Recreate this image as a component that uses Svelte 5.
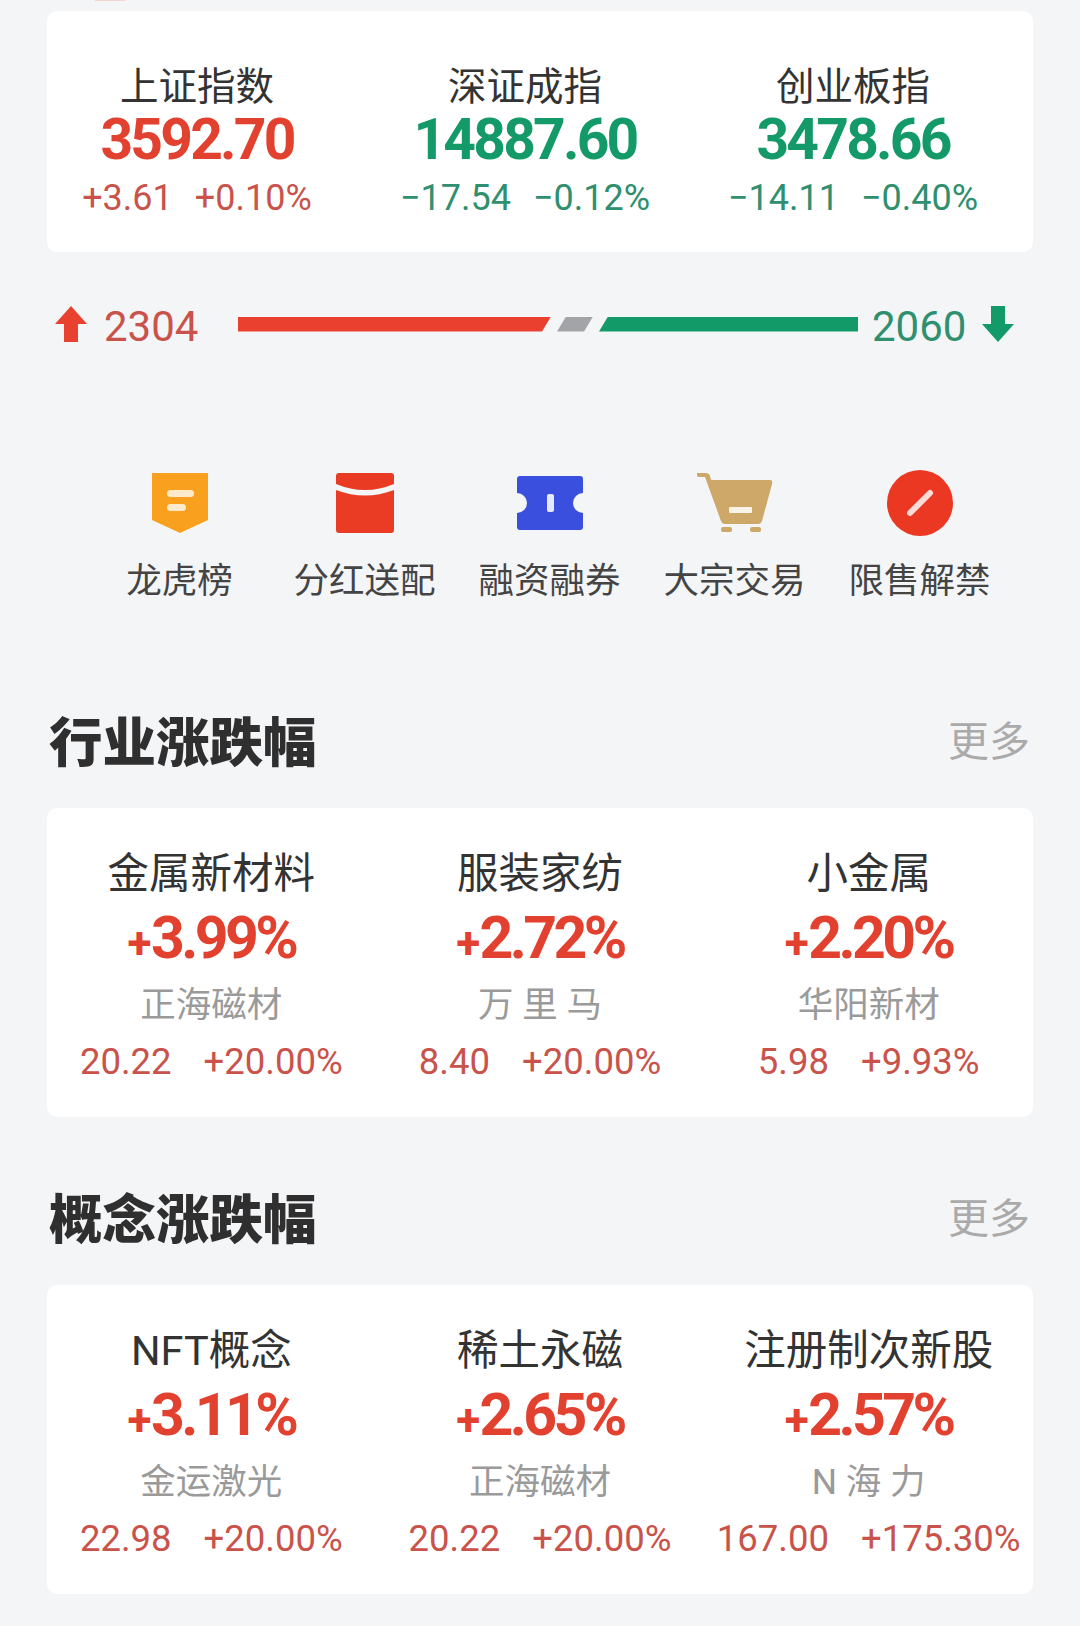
<script>
  const indices = [
    { name: '上证指数', value: '3592.70', change: '+3.61', pct: '+0.10%', tone: 'up' },
    { name: '深证成指', value: '14887.60', change: '−17.54', pct: '−0.12%', tone: 'down' },
    { name: '创业板指', value: '3478.66', change: '−14.11', pct: '−0.40%', tone: 'down' }
  ];

  const tools = ['龙虎榜', '分红送配', '融资融券', '大宗交易', '限售解禁'];

  const sections = [
    {
      title: '行业涨跌幅',
      items: [
        { name: '金属新材料', pct: '3.99%', stock: '正海磁材', price: '20.22', rise: '+20.00%' },
        { name: '服装家纺', pct: '2.72%', stock: '万 里 马', price: '8.40', rise: '+20.00%' },
        { name: '小金属', pct: '2.20%', stock: '华阳新材', price: '5.98', rise: '+9.93%' }
      ]
    },
    {
      title: '概念涨跌幅',
      items: [
        { name: 'NFT概念', pct: '3.11%', stock: '金运激光', price: '22.98', rise: '+20.00%' },
        { name: '稀土永磁', pct: '2.65%', stock: '正海磁材', price: '20.22', rise: '+20.00%' },
        { name: '注册制次新股', pct: '2.57%', stock: 'N 海 力', price: '167.00', rise: '+175.30%' }
      ]
    }
  ];
</script>

<div class="page">
  <div class="top-mark"></div>
  <section class="card index-card">
    {#each indices as item}
      <div class="index">
        <div class="index-name">{item.name}</div>
        <div class="index-value {item.tone}">{item.value}</div>
        <div class="index-sub {item.tone}">
          <span>{item.change}</span><span>{item.pct}</span>
        </div>
      </div>
    {/each}
  </section>

  <div class="breadth">
    <svg class="arrow arrow-up" viewBox="0 0 32 36"><path d="M16 0 L32 18 L23 18 L23 36 L9 36 L9 18 L0 18 Z" fill="#e8412f" /></svg>
    <span class="count up-count">2304</span>
    <div class="bars">
      <div class="bar bar-red"></div>
      <div class="bar bar-gray"></div>
      <div class="bar bar-green"></div>
    </div>
    <span class="count down-count">2060</span>
    <svg class="arrow arrow-down" viewBox="0 0 32 36"><path d="M16 36 L32 18 L23 18 L23 0 L9 0 L9 18 L0 18 Z" fill="#129a68" /></svg>
  </div>

  <nav class="tools">
    {#each tools as label, i}
      <div class="tool">
        <div class="tool-icon">
          {#if i === 0}
            <svg width="56" height="62" viewBox="0 0 56 62">
              <path d="M0 1 H56 V48 L28 61 L0 48 Z" fill="#f9a11f" />
              <rect x="15" y="18" width="27" height="7" rx="3.5" fill="#fdeacb" />
              <rect x="15" y="32" width="19" height="7" rx="3.5" fill="#fdeacb" />
            </svg>
          {:else if i === 1}
            <svg width="58" height="60" viewBox="0 0 58 60">
              <path d="M3 0 H55 Q58 0 58 3 V11 Q29 23 0 11 V3 Q0 0 3 0 Z" fill="#e93a24" />
              <path d="M0 17 Q29 28 58 17 V57 Q58 60 55 60 H3 Q0 60 0 57 Z" fill="#ea3b24" />
            </svg>
          {:else if i === 2}
            <svg width="66" height="54" viewBox="0 0 66 54">
              <path d="M3 0 H63 Q66 0 66 3 V17 A10 10 0 0 0 66 37 V51 Q66 54 63 54 H3 Q0 54 0 51 V37 A10 10 0 0 0 0 17 V3 Q0 0 3 0 Z" fill="#3a4fdd" />
              <rect x="30" y="18" width="7" height="18" rx="2" fill="#e6e9fb" />
            </svg>
          {:else if i === 3}
            <svg width="76" height="60" viewBox="0 0 76 60">
              <path d="M0 0 H9 Q12 0 13 3 L14 7 H73 Q76 7 75 11 L65 48 Q64 51 61 51 H28 Q25 51 24 48 L8 4 H2 Q0 4 0 2 Z" fill="#cda869" />
              <rect x="32" y="34" width="23" height="6" rx="1" fill="#f8f3e8" />
              <rect x="24" y="54" width="11" height="5" rx="2" fill="#cda869" />
              <rect x="53" y="54" width="11" height="5" rx="2" fill="#cda869" />
            </svg>
          {:else}
            <svg width="66" height="66" viewBox="0 0 66 66">
              <circle cx="33" cy="33" r="33" fill="#ea3823" />
              <line x1="23" y1="43" x2="43" y2="23" stroke="#fbdcd6" stroke-width="6" stroke-linecap="round" />
            </svg>
          {/if}
        </div>
        <div class="tool-label">{label}</div>
      </div>
    {/each}
  </nav>

  {#each sections as section}
    <div class="section-head">
      <h2>{section.title}</h2>
      <span class="more">更多</span>
    </div>
    <section class="card rank-card">
      {#each section.items as item}
        <div class="rank">
          <div class="rank-name">{item.name}</div>
          <div class="rank-pct"><span class="plus">+</span>{item.pct}</div>
          <div class="rank-stock">{item.stock}</div>
          <div class="rank-sub"><span>{item.price}</span><span>{item.rise}</span></div>
        </div>
      {/each}
    </section>
  {/each}
</div>

<style>
  :global(body) {
    margin: 0;
    background: #f4f5f7;
  }

  .page {
    --cjk: Roboto, 'Noto Sans CJK SC', sans-serif;
    height: 1626px;
    box-sizing: border-box;
    padding: 0 47px;
    overflow: hidden;
    font-family: var(--cjk);
    color: #333;
  }

  .top-mark {
    width: 30px;
    height: 1px;
    margin: 0 0 10px 48px;
    background: #f6d3ce;
  }

  .card {
    background: #fff;
    border-radius: 10px;
    display: grid;
  }

  .index-card {
    height: 241px;
    box-sizing: border-box;
    grid-template-columns: repeat(3, 300px);
    column-gap: 28px;
    padding-top: 54px;
  }

  .index,
  .rank {
    display: flex;
    flex-direction: column;
    align-items: center;
    white-space: nowrap;
  }

  .index-name {
    font-size: 38.5px;
    line-height: 44px;
  }

  .index-value {
    font-size: 57px;
    line-height: 62px;
    font-weight: 700;
    letter-spacing: -2.8px;
  }

  .index-sub {
    display: flex;
    gap: 22px;
    margin-top: 5px;
    font-size: 36px;
    line-height: 44px;
  }

  .up {
    color: #e2412f;
  }

  .down {
    color: #149a68;
  }

  .index-sub.up {
    color: #c9534b;
  }

  .index-sub.down {
    color: #2f8f6e;
  }

  .breadth {
    display: flex;
    align-items: center;
    height: 44px;
    margin-top: 53px;
    padding-left: 8px;
  }

  .arrow {
    width: 32px;
    height: 36px;
    flex: none;
  }

  .arrow-up {
    margin-top: -6px;
  }

  .arrow-down {
    margin-top: -6px;
    margin-left: 12px;
  }

  .count {
    font-size: 42px;
    line-height: 44px;
  }

  .up-count {
    color: #c9534b;
    margin-left: 17px;
    width: 134px;
  }

  .down-count {
    color: #2f8f6e;
    margin-left: 14px;
    width: 98px;
  }

  .bars {
    display: flex;
    gap: 6px;
    height: 15px;
    margin-top: -6px;
  }

  .bar {
    height: 100%;
  }

  .bar-red {
    width: 313px;
    background: #ea402f;
    clip-path: polygon(0 0, 100% 0, calc(100% - 9px) 100%, 0 100%);
  }

  .bar-gray {
    width: 36px;
    background: #a3a4a8;
    clip-path: polygon(9px 0, 100% 0, calc(100% - 9px) 100%, 0 100%);
  }

  .bar-green {
    width: 259px;
    background: #129a68;
    clip-path: polygon(9px 0, 100% 0, 100% 100%, 0 100%);
  }

  .tools {
    display: grid;
    grid-template-columns: repeat(5, 185px);
    margin-top: 121px;
    padding-left: 40px;
  }

  .tool {
    display: flex;
    flex-direction: column;
    align-items: center;
  }

  .tool-icon {
    height: 66px;
    display: flex;
    align-items: center;
    justify-content: center;
  }

  .tool-icon svg {
    display: block;
  }

  .tool-label {
    margin-top: 22px;
    font-size: 35.5px;
    line-height: 46px;
    color: #444;
    white-space: nowrap;
  }

  .section-head {
    display: flex;
    justify-content: space-between;
    align-items: center;
    height: 70px;
    margin-top: 105px;
    padding-left: 2px;
  }

  .section-head h2 {
    margin: 0;
    font-size: 53.5px;
    line-height: 70px;
    font-weight: 900;
    color: #2f2f2f;
  }

  .more {
    font-size: 41px;
    color: #aaa;
    margin: -12px 3px 0 0;
  }

  .rank-card {
    height: 309px;
    box-sizing: border-box;
    grid-template-columns: repeat(3, 1fr);
    padding-top: 37px;
    margin-top: 29px;
  }

  .rank-card ~ .section-head {
    margin-top: 69px;
  }

  .rank-name {
    font-size: 41.5px;
    line-height: 58px;
  }

  .rank-pct {
    font-size: 59px;
    line-height: 70px;
    font-weight: 700;
    color: #e2412f;
    letter-spacing: -3.6px;
  }

  .plus {
    font-size: 44px;
    margin-right: 3px;
  }

  .rank-stock {
    font-size: 35.5px;
    line-height: 54px;
    color: #9a9a9a;
  }

  .rank-sub {
    display: flex;
    gap: 32px;
    margin-top: 4px;
    font-size: 36.5px;
    line-height: 52px;
    color: #c9534b;
  }
</style>
